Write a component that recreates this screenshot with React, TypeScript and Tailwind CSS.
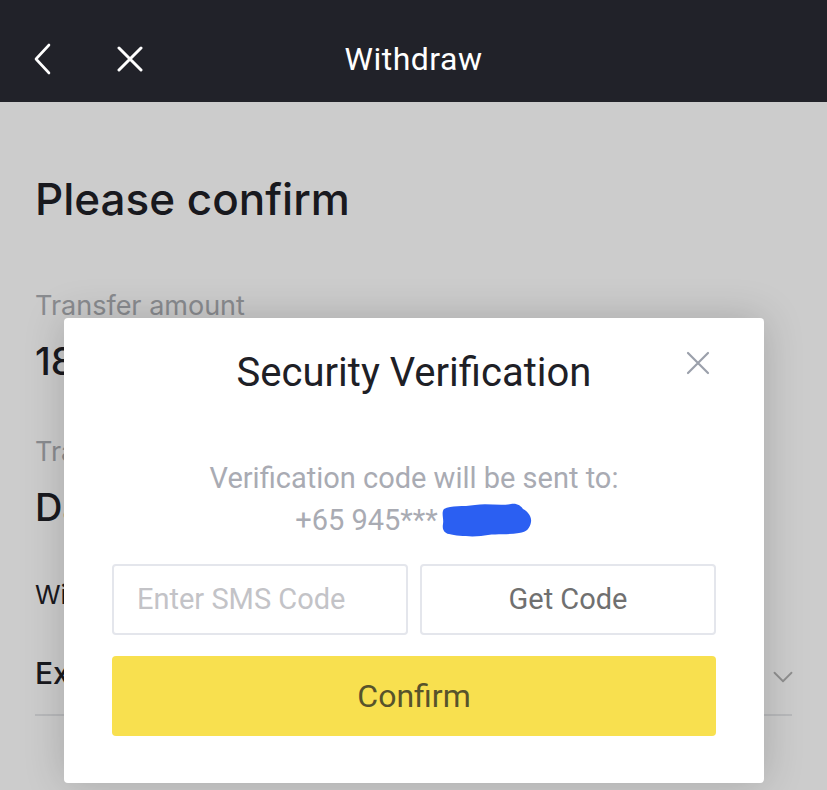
import { ChevronDown } from "lucide-react";

const rows = [
  { label: "Transfer amount", value: "18 USDT" },
  { label: "Transfer network", value: "Dash" },
];

function Scribble() {
  return (
    <svg width="92" height="34" viewBox="0 0 92 34" className="ml-[3px]">
      <path
        d="M3 6 C10 2 22 4 34 2 C46 0 58 3 70 1 C76 0 80 3 82 6 C86 8 91 13 90 19 C89 25 86 29 78 30 C66 32 52 30 40 33 C30 34 16 33 8 31 C3 30 1 26 2 21 C3 15 0 10 3 6 Z"
        fill="#2b5ff2"
      />
    </svg>
  );
}

function BackIcon() {
  return (
    <svg width="20" height="32" viewBox="0 0 20 32" fill="none">
      <path d="M17 2 L4 16 L17 30" stroke="white" strokeWidth="2.6" strokeLinecap="round" strokeLinejoin="round" />
    </svg>
  );
}

function CloseIcon({ size, color, width }: { size: number; color: string; width: number }) {
  return (
    <svg width={size} height={size} viewBox={`0 0 ${size} ${size}`} fill="none">
      <path
        d={`M2 2 L${size - 2} ${size - 2} M${size - 2} 2 L2 ${size - 2}`}
        stroke={color}
        strokeWidth={width}
        strokeLinecap="round"
      />
    </svg>
  );
}

export default function App() {
  return (
    <div className="relative w-[827px] h-[790px] overflow-hidden bg-white" style={{ fontFamily: "Roboto, 'Noto Sans', sans-serif" }}>
      <header className="h-[102px] bg-[#212229] flex items-center pt-[16px] pl-[32px] relative">
        <BackIcon />
        <div className="ml-[65px]">
          <CloseIcon size={26} color="white" width={3} />
        </div>
        <h1 className="absolute left-0 right-0 top-[16px] bottom-0 flex items-center justify-center text-white text-[32px] tracking-[0.5px] pointer-events-none">
          Withdraw
        </h1>
      </header>

      <main className="relative px-[35px] pt-[69px]" style={{ fontFamily: "Inter, Roboto, sans-serif" }}>
        <h2 className="text-[44px] leading-[56px] font-medium text-[#1e2026]">Please confirm</h2>

        <div className="mt-[64px] flex flex-col gap-[54px]">
          {rows.map((r) => (
            <div key={r.label}>
              <p className="text-[27px] leading-[30px] text-[#acaeb3]">{r.label}</p>
              <p className="mt-[18px] text-[38px] leading-[44px] font-medium text-[#1e2026]">{r.value}</p>
            </div>
          ))}
        </div>

        <p className="mt-[50px] text-[26px] leading-[32px] text-[#1e2026]">Wi</p>
        <div className="mt-[41px] pb-[20px] border-b-2 border-[#e6e8ea] flex items-center justify-between">
          <span className="text-[30px] leading-[36px] font-medium text-[#1e2026]">Exchange</span>
          <ChevronDown size={34} strokeWidth={1.3} className="text-[#b3b3b3] mr-[-8px] mt-[8px]" />
        </div>
      </main>

      <div className="absolute left-0 right-0 top-[102px] bottom-0 bg-black/20" />

      <div className="absolute left-[64px] top-[318px] w-[700px] h-[465px] bg-white rounded-[4px] shadow-[0_0_40px_rgba(0,0,0,0.18)] px-[48px] pt-[33px]">
        <div className="relative">
          <h3 className="text-center text-[40px] leading-[44px] text-[#1e2026]">Security Verification</h3>
          <div className="absolute right-[6px] top-[0px]">
            <CloseIcon size={24} color="#9ba0ab" width={2.2} />
          </div>
        </div>

        <p className="mt-[62px] text-center text-[29px] leading-[42px] text-[#a9abb3]">
          Verification code will be sent to:
        </p>
        <div className="flex items-center justify-center text-[29px] leading-[42px] text-[#a9abb3]">
          <span>+65 945***</span>
          <Scribble />
        </div>

        <div className="mt-[23px] grid grid-cols-2 gap-[12px]">
          <div className="h-[71px] border-2 border-[#e4e6ec] rounded-[4px] flex items-center px-[23px] text-[29px] text-[#c3c3c7]">
            Enter SMS Code
          </div>
          <div className="h-[71px] border-2 border-[#e4e6ec] rounded-[4px] flex items-center justify-center text-[29px] text-[#707070]">
            Get Code
          </div>
        </div>

        <button className="mt-[21px] w-full h-[80px] bg-[#f8e04f] rounded-[4px] text-[32px] text-[#57532b]">
          Confirm
        </button>
      </div>
    </div>
  );
}
